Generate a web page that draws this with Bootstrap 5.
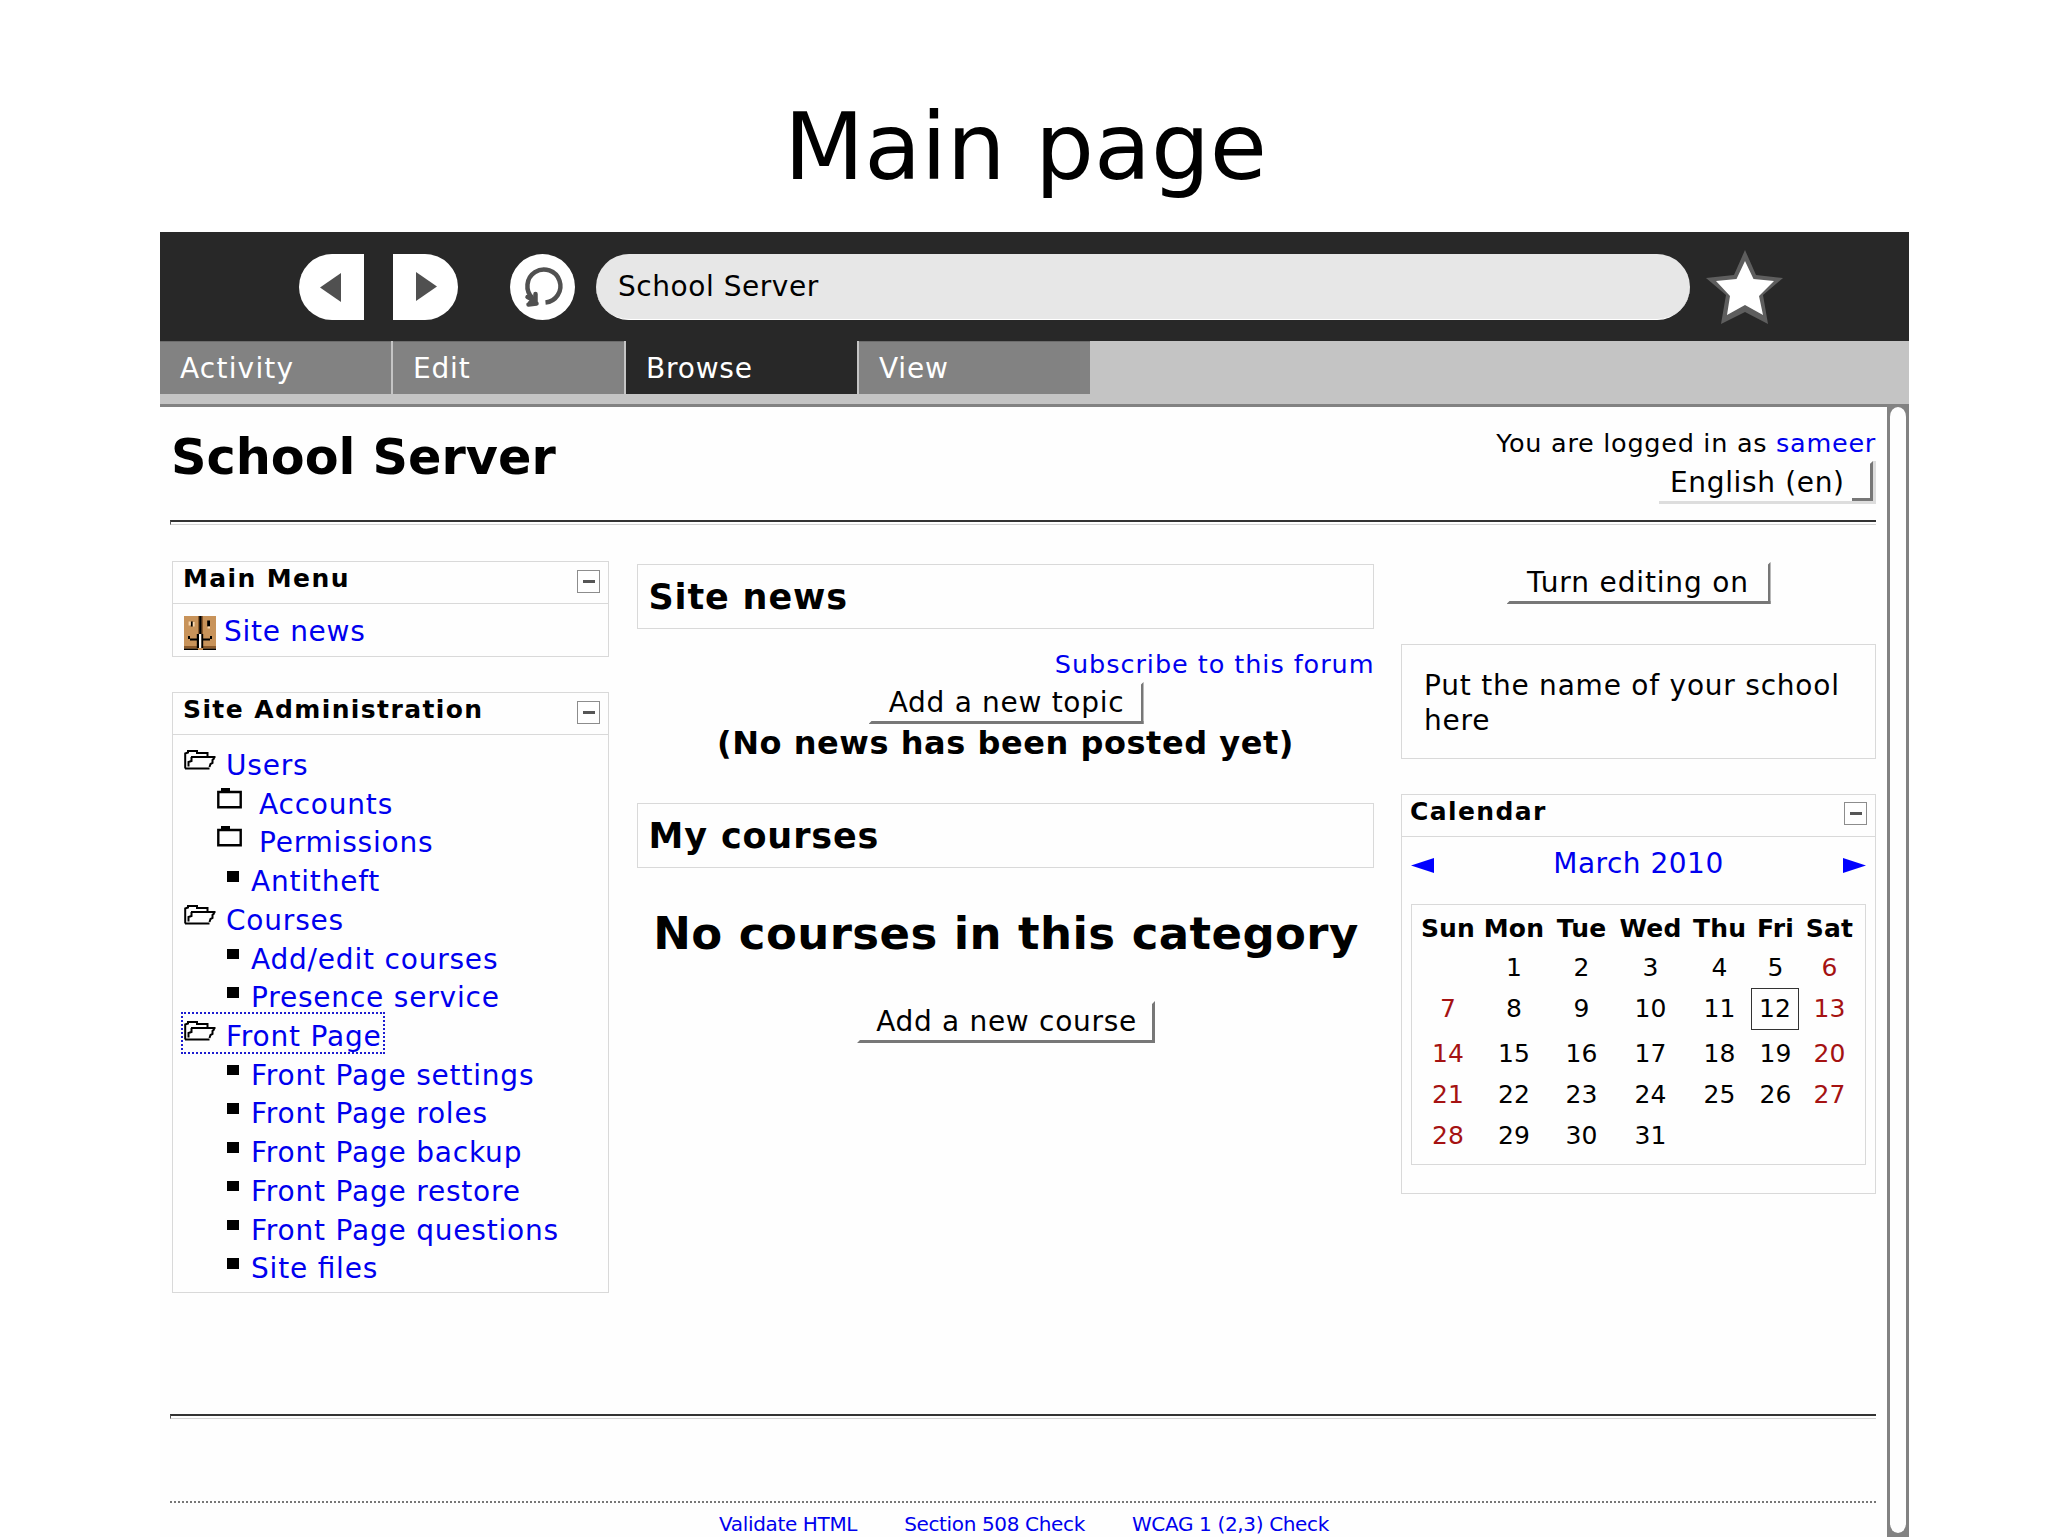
<!DOCTYPE html>
<html lang="en">
<head>
<meta charset="utf-8">
<title>Main page</title>
<link href="https://cdn.jsdelivr.net/npm/bootstrap@5.3.0/dist/css/bootstrap.min.css" rel="stylesheet">
<style>
body{background:#fff;color:#000;font-family:"DejaVu Sans",sans-serif;font-size:28px;letter-spacing:.8px;line-height:38.72px;height:1537px;overflow:hidden;font-feature-settings:"liga" 1}
a{color:#0000ee;text-decoration:none}
.slide-title{height:232px;padding:92px 0 0 3px;font-size:93px;line-height:110px;letter-spacing:-.1px}
.win{width:1749px;height:1305px;margin-left:160px;background:#fefefe}
.toolbar{height:109px;background:#282828;padding:1px 0 0 139px}
.tool{width:65px;height:66px;background:#fff}
.tool-back{border-radius:33px 0 0 33px}
.tool-fwd{border-radius:0 33px 33px 0;margin-left:29px}
.tool-reload{border-radius:50%;margin:0 21px 0 52px}
.url{width:1094px;height:66px;border-radius:33px;background:#e7e7e7;border-bottom:1px solid #fff;padding:2px 0 0 22px;letter-spacing:.55px}
.tabs{height:66px;background:#c4c4c4;border-bottom:3px solid #828282}
.tabx{width:231px;height:53px;margin-right:2px;background:#828282;color:#fff;padding:0 0 0 20px;line-height:53px;border-top:1px solid #6c6c6c}
.tabx:first-child{letter-spacing:1.2px}
.tabx.active{background:#282828;border-color:#282828}
.page{width:1727px;padding:0 11px 0 10px}
.scroll{width:22px;background:#828282;padding:0 3px 4px}
.thumb{background:#fefefe;border-radius:9px/11px}
.site-name{font-size:49.3px;line-height:60px;letter-spacing:0;font-weight:700;padding:20px 0 0 1px}
.login{font-size:25.5px;letter-spacing:.72px;line-height:34px;padding-top:19px}
.lang{width:217px;height:43px;margin-top:1px;border-right:3px solid #ddd;border-bottom:3px solid #ddd;padding-left:11px;line-height:44px;letter-spacing:.65px}
.lang-corner{width:21px;height:40px;border-right:3px solid #777;border-bottom:3px solid #777;clip-path:polygon(0 100%,0 90%,80% 90%,80% 10%,100% 0,100% 100%)}
.rule{height:5px;border-top:2.4px solid #333;border-bottom:1px solid #d4d4d4;border-left:1px solid #555}
.col-l{width:437px}.col-c{width:737px}.col-r{width:475px}
.bx{border:1px solid #d9d9d9}
.bx-head{height:42px;border-bottom:1px solid #d9d9d9;padding:0 8px 0 10px;font-size:25px;letter-spacing:1.4px;font-weight:700;line-height:33px}
.collapse-btn{width:23px;height:23px;border:1px solid #8c8c8c;border-width:1px 1px 1.6px 1.6px;margin-top:8px}
.collapse-btn i{width:12px;height:2.6px;background:#555}
.forum a{margin-top:1px;letter-spacing:.7px}
.tree{padding:10px 0 5px 11px}
.tree li{height:38.72px;white-space:nowrap}
.tree a{margin-top:2px}
.lvl-top svg{margin:5px 10px 0 0}
.lvl-folder{padding-left:33px}.lvl-folder svg{margin:4px 17px 0 0}
.lvl-leaf{padding-left:43px}
.sq{width:12px;height:10.5px;background:#000;margin:10px 12px 0 0}
.foc{width:204px;height:42px;border:2px dotted #1c1cd0;margin:-4px 0 0 -3px;padding:2px 0 0 1px}
.bigbar{height:65px;padding-left:11px;font-size:35px;letter-spacing:.85px;font-weight:700;line-height:64px}
.btnx{background:none;border:0;border-right:3px solid #777;border-bottom:3px solid #777;height:42px;line-height:42px;color:#000;letter-spacing:.7px;clip-path:polygon(0 100%,3px calc(100% - 3px),0 calc(100% - 3px),0 0,calc(100% - 3px) 3px,100% 0,100% 100%)}
.subscribe{font-size:25.5px;letter-spacing:.95px;line-height:34px;margin:18px -1px 0 0}
.nonews{font-size:32px;letter-spacing:.55px;font-weight:700;line-height:38px;padding-left:1px}
.nocourses{font-size:45px;letter-spacing:.42px;font-weight:700;line-height:54px;white-space:nowrap;padding-left:2px}
.school{height:115px;margin-top:40px;padding:23px 0 0 22px;line-height:35px;letter-spacing:.78px}
.cal{height:261px;padding:6px 5px 0 6px}
.cal table{table-layout:fixed;width:441px;font-size:25px;letter-spacing:.2px;line-height:36px}
.cal th,.cal td{height:41px;padding:0;text-align:center;vertical-align:top;white-space:nowrap}
.cal thead th{height:39px}
.we{color:#a51212}
.today-cell{width:48px;height:42px;border:1.6px solid #333;line-height:40px;margin-top:-3px}
.dots{border-top:2px dotted #777}
.foot{font-size:20px;letter-spacing:-.35px;line-height:28px}
</style>
<script src="https://cdn.jsdelivr.net/npm/bootstrap@5.3.0/dist/js/bootstrap.bundle.min.js"></script>
</head>
<body>
<svg width="0" height="0" class="position-absolute">
  <symbol id="open" viewBox="0 0 32 20"><path d="M1.2 18.5V3.5L4 2.5V1h9v2h10.500v3.500M1 18.500h24.500M7 7h24.500M7.500 7v4L4.500 12v4.500M30.500 8l-2 2v3l-2 1-1 3" fill="none" stroke="#000" stroke-width="2"/></symbol>
  <symbol id="closed" viewBox="0 0 25 21"><path d="M4 0h9v4H4z"/><path d="M1.300 4h22.400v15.200H1.300z" fill="none" stroke="#000" stroke-width="2.400"/></symbol>
</svg>
<h1 class="slide-title m-0 text-center fw-normal">Main page</h1>
<div class="win d-flex flex-column">
  <div class="toolbar d-flex align-items-center flex-shrink-0">
    <div class="tool tool-back"><svg width="65" height="66" class="d-block"><path d="M21 33.500 42 19v29z" fill="#505050"/></svg></div>
    <div class="tool tool-fwd"><svg width="65" height="66" class="d-block"><path d="M44 32.500 23 18v29z" fill="#505050"/></svg></div>
    <div class="tool tool-reload"><svg width="65" height="66" class="d-block"><path d="M35.500 48.500A16.500 16.500 0 1 0 22.500 44" fill="none" stroke="#505050" stroke-width="4.500"/><path d="M25.500 40v9.500M18.500 50.500l8-1M17.500 43l6 3-4 3.500" fill="none" stroke="#505050" stroke-width="4.500" stroke-linecap="round" stroke-linejoin="round"/></svg></div>
    <div class="url d-flex align-items-center">School Server</div>
    <svg width="78" height="76" class="ms-3" viewBox="0 0 78 76"><path d="M39 1 50 26 77 29 57 46 62 75 39 63 15 75 20 46 0 29 28 26z" fill="#5e5e5e"/><path d="M39 12 47.500 30 68 32 53 47 57 66 39 56 21 66 24 47 10 32 30.500 30z" fill="#fff"/></svg>
  </div>
  <nav class="tabs d-flex flex-shrink-0">
    <div class="tabx">Activity</div><div class="tabx">Edit</div><div class="tabx active">Browse</div><div class="tabx">View</div>
  </nav>
  <div class="d-flex" style="height:1130px">
    <main class="page">
      <header class="d-flex justify-content-between" style="height:113px">
        <div class="site-name">School Server</div>
        <div class="d-flex flex-column align-items-end">
          <div class="login">You are logged in as <a href="#">sameer</a></div>
          <div class="lang d-flex justify-content-between">English (en)<span class="lang-corner"></span></div>
        </div>
      </header>
      <div class="rule"></div>
      <div class="d-flex justify-content-between" style="height:889px;padding:36px 0 0 2px">
        <section class="col-l">
          <div class="bx" style="height:96px">
            <div class="bx-head d-flex justify-content-between">Main Menu<span class="collapse-btn d-flex align-items-center justify-content-center"><i></i></span></div>
            <div class="d-flex forum" style="padding:8px 0 0 11px">
              <svg width="32" height="34" viewBox="0 0 16 17" style="margin:4px 8px 0 0"><path fill="#c8935a" d="M0 0h16v17H0z"/><path fill="#8a5a2c" d="M0 15h16v1H0zM7 0h.6v9H7zM8.800 0h.7v9h-.7z"/><path d="M7.600 0h1.200v9H7.600zM6.400 9h1.100v7H6.400zM8.600 9h1v7h-1zM0 16.300h7v.7H0zM9.500 16.300H16v.7H9.500zM3.400 2.700h1v2.500h-1zM11.600 2.300h1.400v3h-1.400zM2 10h1v1.500H2zM3 11.300h3.500v.9H3zM13 10h1v1.500h-1zM9.500 11.300H13v.9H9.500z"/><path fill="#fff" d="M7.500 9h1.100v7H7.500z"/><path fill="#f8d8b0" d="M2.300 2.700h1.100v2H2.300zM4.400 3h.9v2.300h-.9zM11.800 5.300H13v1h-1.200z"/></svg>
              <a href="#">Site news</a>
            </div>
          </div>
          <div class="bx" style="margin-top:35px">
            <div class="bx-head d-flex justify-content-between">Site Administration<span class="collapse-btn d-flex align-items-center justify-content-center"><i></i></span></div>
            <ul class="tree list-unstyled m-0">
              <li class="lvl-top d-flex align-items-start"><svg width="32" height="20"><use href="#open"/></svg><a href="#">Users</a></li>
              <li class="lvl-folder d-flex align-items-start"><svg width="25" height="21"><use href="#closed"/></svg><a href="#">Accounts</a></li>
              <li class="lvl-folder d-flex align-items-start"><svg width="25" height="21"><use href="#closed"/></svg><a href="#">Permissions</a></li>
              <li class="lvl-leaf d-flex align-items-start"><span class="sq"></span><a href="#">Antitheft</a></li>
              <li class="lvl-top d-flex align-items-start"><svg width="32" height="20"><use href="#open"/></svg><a href="#">Courses</a></li>
              <li class="lvl-leaf d-flex align-items-start"><span class="sq"></span><a href="#">Add/edit courses</a></li>
              <li class="lvl-leaf d-flex align-items-start"><span class="sq"></span><a href="#">Presence service</a></li>
              <li class="lvl-top d-flex align-items-start"><div class="foc d-flex align-items-start"><svg width="32" height="20"><use href="#open"/></svg><a href="#">Front Page</a></div></li>
              <li class="lvl-leaf d-flex align-items-start"><span class="sq"></span><a href="#">Front Page settings</a></li>
              <li class="lvl-leaf d-flex align-items-start"><span class="sq"></span><a href="#">Front Page roles</a></li>
              <li class="lvl-leaf d-flex align-items-start"><span class="sq"></span><a href="#">Front Page backup</a></li>
              <li class="lvl-leaf d-flex align-items-start"><span class="sq"></span><a href="#">Front Page restore</a></li>
              <li class="lvl-leaf d-flex align-items-start"><span class="sq"></span><a href="#">Front Page questions</a></li>
              <li class="lvl-leaf d-flex align-items-start"><span class="sq"></span><a href="#">Site files</a></li>
            </ul>
          </div>
        </section>
        <section class="col-c d-flex flex-column align-items-center" style="padding-top:3px">
          <div class="bx bigbar w-100">Site news</div>
          <div class="subscribe align-self-end"><a href="#">Subscribe to this forum</a></div>
          <button class="btnx p-0 ps-1" style="width:275px;margin:1px 0 0 2px">Add a new topic</button>
          <div class="nonews">(No news has been posted yet)</div>
          <div class="bx bigbar w-100" style="margin-top:41px">My courses</div>
          <div class="nocourses" style="margin-top:39px">No courses in this category</div>
          <button class="btnx p-0 ps-1" style="width:298px;margin:40px 0 0 2px">Add a new course</button>
        </section>
        <section class="col-r d-flex flex-column">
          <button class="btnx p-0 align-self-center" style="width:264px;margin-top:1px;padding-left:2px!important;letter-spacing:.85px">Turn editing on</button>
          <div class="bx school">Put the name of your school here</div>
          <div class="bx" style="height:400px;margin-top:35px">
            <div class="bx-head d-flex justify-content-between ps-2">Calendar<span class="collapse-btn d-flex align-items-center justify-content-center" style="margin-top:7px"><i></i></span></div>
            <div style="padding:6px 9px 0">
              <div class="d-flex justify-content-between align-items-center" style="height:39px;margin-bottom:22px">
                <svg width="24" height="15" style="margin-top:6px"><path d="M0 7.500 23 0v15z" fill="#00f"/></svg>
                <a href="#" style="padding-top:4px;letter-spacing:.5px">March 2010</a>
                <svg width="24" height="15" style="margin-top:6px"><path d="M24 7.500 1 0v15z" fill="#00f"/></svg>
              </div>
              <div class="bx cal">
                <table>
                  <colgroup><col style="width:60px"><col style="width:72px"><col style="width:63px"><col style="width:75px"><col style="width:63px"><col style="width:49px"><col style="width:59px"></colgroup>
                  <thead><tr><th>Sun</th><th>Mon</th><th>Tue</th><th>Wed</th><th>Thu</th><th>Fri</th><th>Sat</th></tr></thead>
                  <tbody>
                    <tr><td></td><td>1</td><td>2</td><td>3</td><td>4</td><td>5</td><td class="we">6</td></tr>
                    <tr style="height:45px"><td class="we">7</td><td>8</td><td>9</td><td>10</td><td>11</td><td><div class="today-cell">12</div></td><td class="we">13</td></tr>
                    <tr><td class="we">14</td><td>15</td><td>16</td><td>17</td><td>18</td><td>19</td><td class="we">20</td></tr>
                    <tr><td class="we">21</td><td>22</td><td>23</td><td>24</td><td>25</td><td>26</td><td class="we">27</td></tr>
                    <tr><td class="we">28</td><td>29</td><td>30</td><td>31</td><td></td><td></td><td></td></tr>
                  </tbody>
                </table>
              </div>
            </div>
          </div>
        </section>
      </div>
      <div class="rule"></div>
      <div class="dots" style="margin-top:82px"></div>
      <footer class="foot d-flex justify-content-center" style="gap:47px;padding:7px 0 0 2px"><a href="#">Validate HTML</a><a href="#">Section 508 Check</a><a href="#">WCAG 1 (2,3) Check</a></footer>
    </main>
    <div class="scroll d-flex"><div class="thumb flex-grow-1"></div></div>
  </div>
</div>
</body>
</html>
